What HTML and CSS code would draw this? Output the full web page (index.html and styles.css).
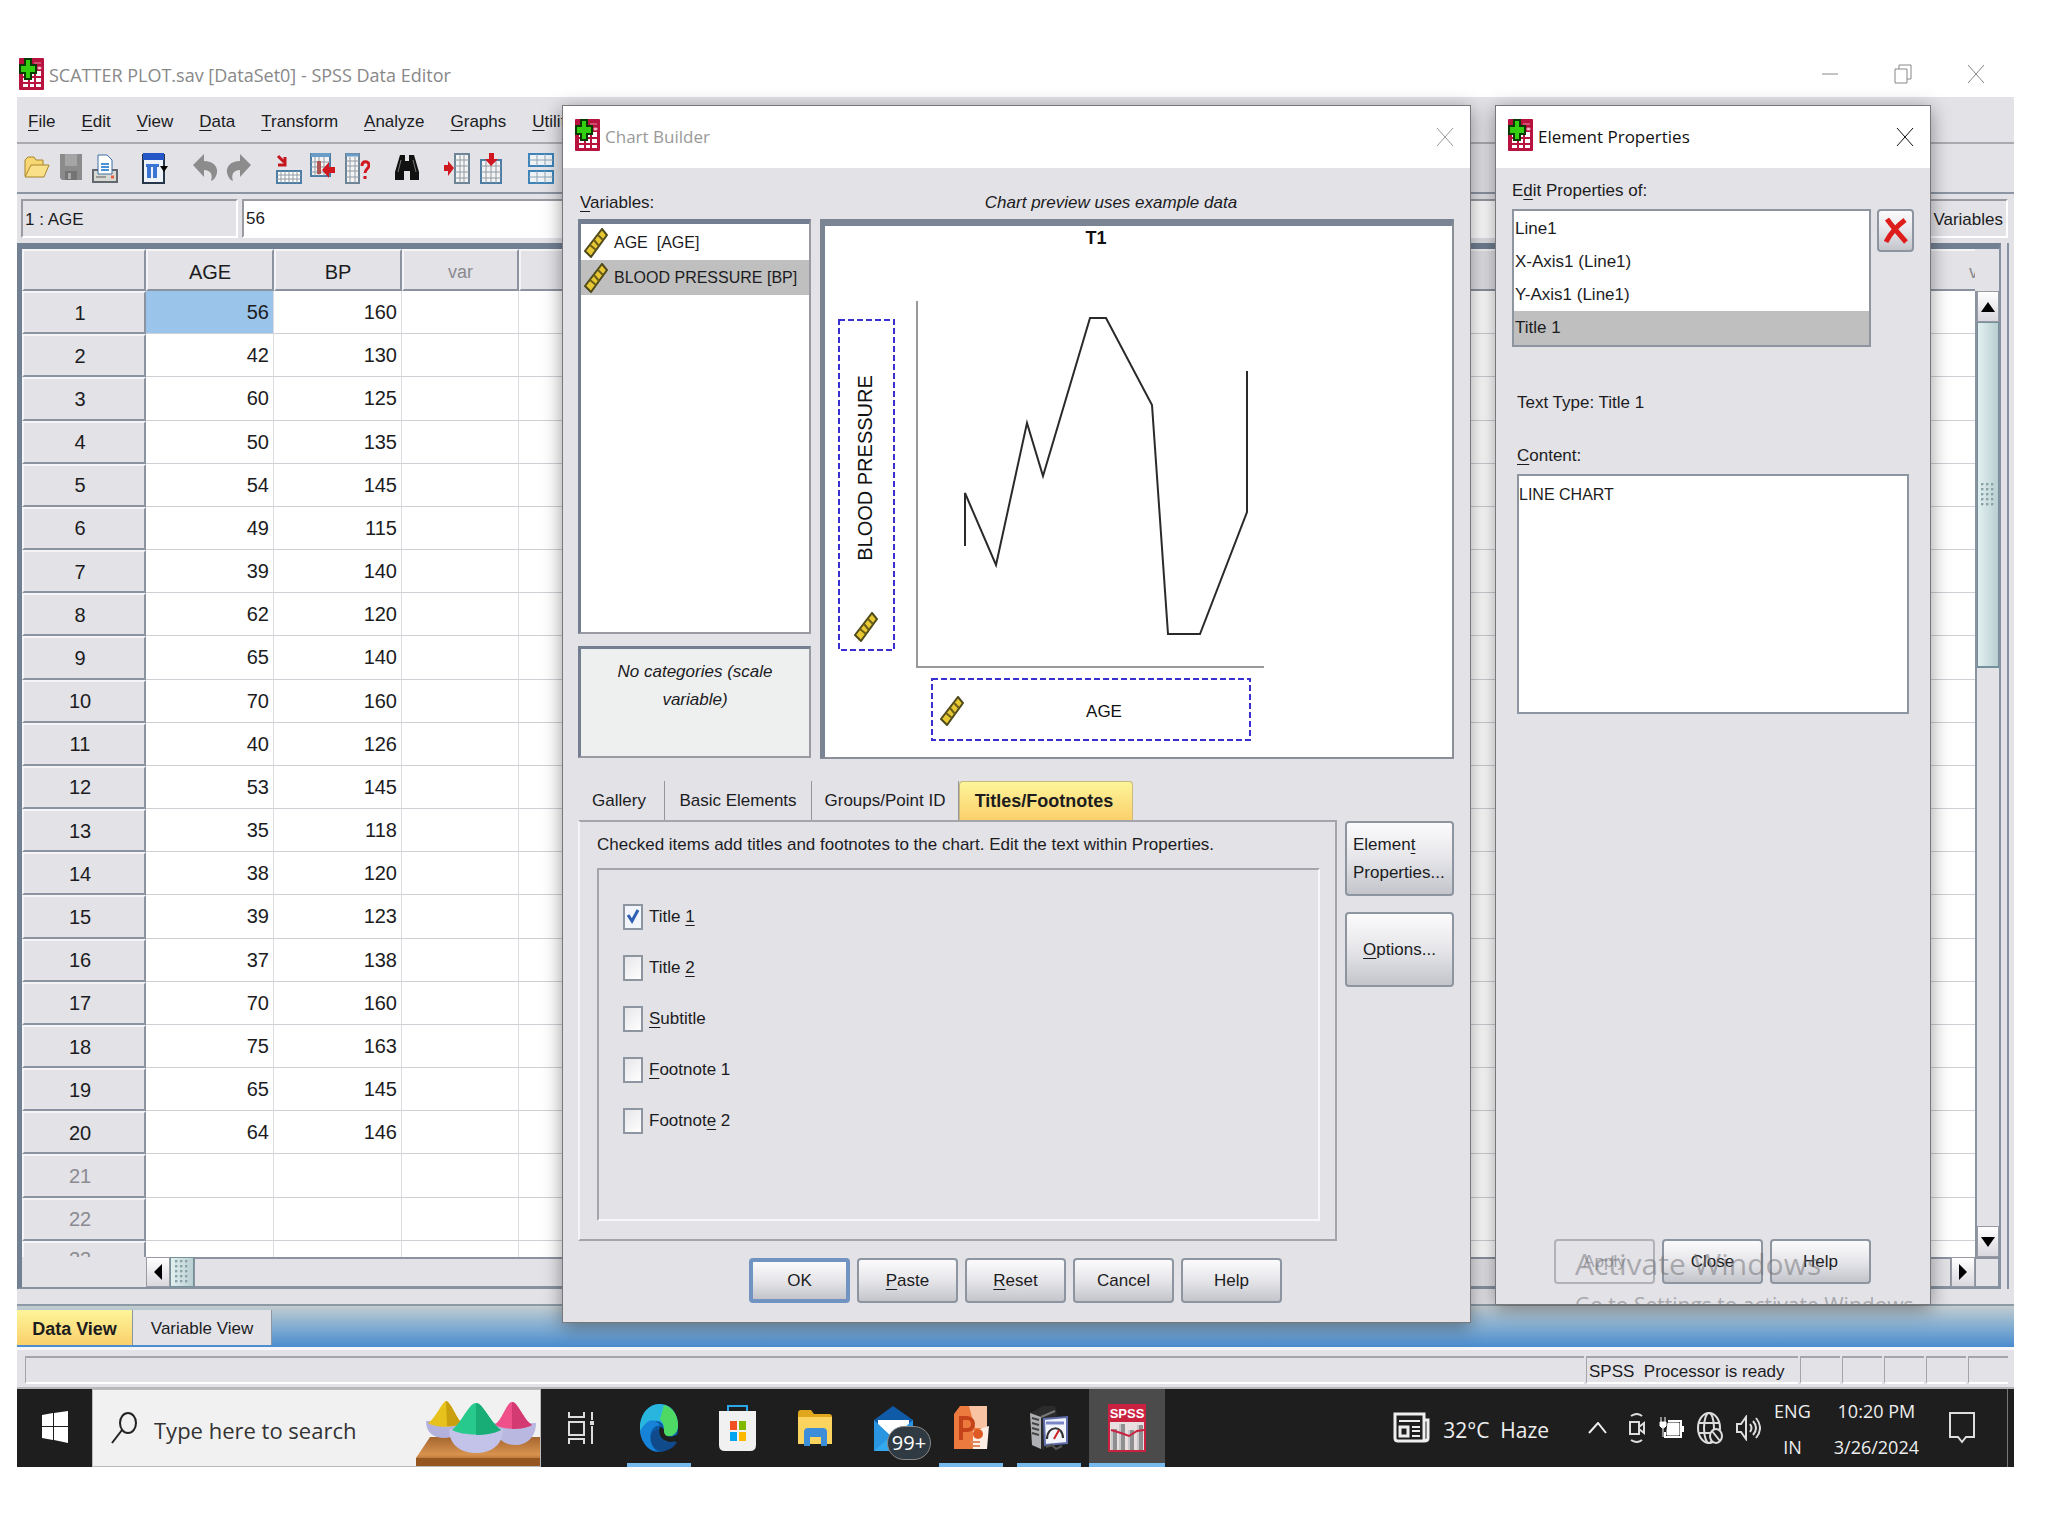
FILE: index.html
```html
<!DOCTYPE html>
<html lang="en">

<head>
    <meta charset="UTF-8">
    <meta name="viewport" content="width=device-width, initial-scale=1.0">
    <title>SCATTER PLOT.sav [DataSet0] - SPSS Data Editor</title>
    <link rel="stylesheet" href="styles.css">
</head>

<body>
    <!-- shared icons -->
    <svg width="0" height="0" class="defs" aria-hidden="true">
        <symbol id="app" viewBox="0 0 25 32">
            <rect width="25" height="32" rx="1" fill="#b8123f"/>
            <path d="M4 13h18v16H4z" fill="#fff"/>
            <path d="M10 12v18M16 10v20M2 19h21M2 25h21" stroke="#b8123f" stroke-width="2"/>
            <path d="M15 5h7M19 9h3v2h-3z" stroke="#e78aa5" fill="#fff"/>
            <path d="M6 1h6v6h5v8h-5v6H6v-6H1V7h5z" fill="#35cf12" stroke="#063a00" stroke-width="2"/>
        </symbol>
        <symbol id="ruler" viewBox="0 0 24 30">
            <path d="M18 1l5 6L7 29l-6-6z" fill="#e8c832" stroke="#4f4a1c" stroke-width="2"/>
            <path d="M14 7l5 5M10 12l5 6M6 17l6 5" stroke="#6b5f1c" stroke-width="2"/>
        </symbol>
        <symbol id="close" viewBox="0 0 18 20">
            <path d="M1 1l16 18M17 1L1 19" stroke="currentColor" fill="none"/>
        </symbol>
    </svg>

    <div class="desktop">
        <main class="editor">
            <header class="titlebar">
                <svg class="app_icon"><use href="#app"/></svg>
                <h1>SCATTER PLOT.sav [DataSet0] - SPSS Data Editor</h1>
                <button aria-label="Minimize"><svg width="18" height="20" viewBox="0 0 18 20"><path d="M1 10h16" stroke="#888"/></svg></button>
                <button aria-label="Restore"><svg width="18" height="20" viewBox="0 0 18 20" fill="none" stroke="#888"><path d="M1 5h12v14H1zM5 5V1h12v14h-4"/></svg></button>
                <button aria-label="Close"><svg width="18" height="20"><use href="#close"/></svg></button>
            </header>

            <nav class="menu">
                <a href="#"><u>F</u>ile</a>
                <a href="#"><u>E</u>dit</a>
                <a href="#"><u>V</u>iew</a>
                <a href="#"><u>D</u>ata</a>
                <a href="#"><u>T</u>ransform</a>
                <a href="#"><u>A</u>nalyze</a>
                <a href="#"><u>G</u>raphs</a>
                <a href="#"><u>U</u>tilities</a>
            </nav>

            <div class="toolbar">
                <button aria-label="Open"><svg viewBox="0 0 26 32"><path d="M1 24V8l3-3h6l2 3h7v5" fill="#f7d774" stroke="#a8862b"/><path d="M1 25l6-12h18l-5 12z" fill="#fbe08a" stroke="#a8862b"/></svg></button>
                <button aria-label="Save"><svg viewBox="0 0 26 32"><path d="M2 2h22v26H4l-2-2z" fill="#8b8b8b"/><path d="M7 2h12v12H7z" fill="#a5a5a5"/><path d="M7 19h12v9H7z" fill="#747474"/><path d="M10 21h3v6h-3z" fill="#aaa"/></svg></button>
                <button aria-label="Print"><svg viewBox="0 0 26 32"><path d="M1 18h24v12H1z" fill="#d9d9d4" stroke="#62686f" stroke-width="2"/><path d="M6 3h9l5 5v14H6z" fill="#fff" stroke="#3b6ea5"/><path d="M9 12h8M9 15h8M9 18h8" stroke="#4b91d8" stroke-width="2"/><path d="M4 25h10" stroke="#999" stroke-width="2"/><path d="M19 25h3" stroke="#e8603c" stroke-width="3"/></svg></button>
                <button aria-label="Dialog recall" class="gap"><svg viewBox="0 0 26 32"><path d="M1 3h21v28H1z" fill="#eef3fa" stroke="#28364a" stroke-width="2"/><path d="M1 1h21v7H1z" fill="#2456c8"/><path d="M4 12h13v3h-2v11h-4V15h-2v11H5V15H4z" fill="#3a74d4"/><path d="M18 14h8l-4 6z" fill="#000"/></svg></button>
                <button aria-label="Undo" class="gap"><svg viewBox="0 0 26 32"><path d="M1 13L12 2v7c9 0 14 5 13 12-1 4-3 7-6 8 2-6 0-11-7-11v7z" fill="#8c8c8c"/></svg></button>
                <button aria-label="Redo"><svg viewBox="0 0 26 32"><path d="M25 13L14 2v7C5 9 0 14 1 21c1 4 3 7 6 8-2-6 0-11 7-11v7z" fill="#8c8c8c"/></svg></button>
                <button aria-label="Go to case" class="gap"><svg viewBox="0 0 26 32"><path d="M2 4l6 6M9 5v8H2" stroke="#c6161d" stroke-width="3" fill="none"/><path d="M1 19h24v12H1z" fill="#fff" stroke="#4c7da5" stroke-width="2"/><path d="M1 23h24M1 27h24M5 19v12M9 19v12M13 19v12M17 19v12M21 19v12" stroke="#909aa4"/></svg></button>
                <button aria-label="Go to variable"><svg viewBox="0 0 26 32"><path d="M1 2h19v22H1z" fill="#f4f4f4" stroke="#4c7da5" stroke-width="2"/><path d="M1 3h19" stroke="#6a9cc8" stroke-width="4"/><path d="M1 10h19M1 15h19M1 20h19M5 5v19M9 5v19M14 5v19" stroke="#909aa4"/><path d="M7 9h4v13H7z" fill="#b0554f"/><path d="M12 18l7-8v5h6v6h-6v5z" fill="#cf1820"/></svg></button>
                <button aria-label="Variables"><svg viewBox="0 0 26 32"><path d="M2 2h13v29H2z" fill="#f4f4f4" stroke="#6d8496" stroke-width="2"/><path d="M2 3h13" stroke="#6a9cc8" stroke-width="3"/><path d="M2 9h13M2 14h13M2 19h13M2 25h13M6 5v26M11 5v26" stroke="#909aa4"/><path d="M18 14c0-6 7-5 7-1 0 4-4 4-4 8M21 24v3" stroke="#cf1820" stroke-width="3" fill="none"/></svg></button>
                <button aria-label="Find" class="gap"><svg viewBox="0 0 26 32"><path d="M6 3h5v6h4V3h5l5 17v8h-9v-9h-6v9H1v-8z" fill="#111"/><path d="M7 8L4 20M19 8l3 12" stroke="#777"/></svg></button>
                <button aria-label="Insert cases" class="gap"><svg viewBox="0 0 26 32"><path d="M11 2h14v29H11z" fill="#f4f4f4" stroke="#6d8496" stroke-width="2"/><path d="M11 8h14M11 14h14M11 20h14M11 26h14M16 2v29M20 2v29" stroke="#909aa4"/><path d="M10 16L4 9v4H0v6h4v5z" fill="#cf1820"/></svg></button>
                <button aria-label="Insert variable"><svg viewBox="0 0 26 32"><path d="M3 8h20v23H3z" fill="#f4f4f4" stroke="#4c7da5" stroke-width="2"/><path d="M3 14h20M3 20h20M3 26h20M8 8v23M13 8v23M18 8v23" stroke="#909aa4"/><path d="M13 14L7 7h4V1h5v6h4z" fill="#cf1820"/></svg></button>
                <button aria-label="Split file" class="gap"><svg viewBox="0 0 26 32"><path d="M1 2h24v12H1zM1 19h24v12H1z" fill="#eef3f7" stroke="#3f84b8" stroke-width="2"/><path d="M1 8h24M9 2v12M17 2v12M1 25h24M9 19v12M17 19v12" stroke="#90a4b4"/></svg></button>
            </div>

            <div class="cellbar">
                <div class="cell_name">1 : AGE</div>
                <input class="cell_value" type="text" value="56" aria-label="Cell value">
                <div class="cell_info">Variables</div>
            </div>

            <div class="sheet">
                <div class="sheet_view">
                    <table>
                        <thead><tr></tr></thead>
                        <tbody></tbody>
                    </table>
                </div>
                <div class="vscroll">
                    <button aria-label="Scroll up"><svg width="14" height="10" viewBox="0 0 14 10"><path d="M0 10L7 0l7 10z"/></svg></button>
                    <div class="vthumb"><i class="grip"></i></div>
                    <div class="vtrack"></div>
                    <button aria-label="Scroll down"><svg width="14" height="10" viewBox="0 0 14 10"><path d="M0 0l7 10 7-10z"/></svg></button>
                </div>
                <div class="hscroll">
                    <span class="stub"></span>
                    <button aria-label="Scroll left"><svg width="8" height="16" viewBox="0 0 8 16"><path d="M8 0L0 8l8 8z"/></svg></button>
                    <div class="hthumb"><i class="grip"></i></div>
                    <div class="htrack"></div>
                    <button aria-label="Scroll right"><svg width="8" height="16" viewBox="0 0 8 16"><path d="M0 0l8 8-8 8z"/></svg></button>
                    <span class="corner"></span>
                </div>
            </div>

            <div class="views">
                <button class="active">Data View</button>
                <button>Variable View</button>
            </div>

            <footer class="status">
                <span class="wide"></span>
                <span class="ready">SPSS&nbsp; Processor is ready</span>
                <span></span><span></span><span></span><span></span><span></span>
            </footer>
        </main>

        <section class="dialog chart_builder">
            <header>
                <svg class="app_icon"><use href="#app"/></svg>
                <h2>Chart Builder</h2>
                <button aria-label="Close"><svg width="18" height="20"><use href="#close"/></svg></button>
            </header>
            <div class="builder_top">
                <div class="var_side">
                    <h3><u>V</u>ariables:</h3>
                    <ul class="var_list">
                        <li><svg><use href="#ruler"/></svg>AGE&nbsp; [AGE]</li>
                        <li class="active"><svg><use href="#ruler"/></svg>BLOOD PRESSURE [BP]</li>
                    </ul>
                    <p class="categories">No categories (scale variable)</p>
                </div>
                <div class="preview_side">
                    <h3>Chart preview uses example data</h3>
                    <div class="preview">
                        <svg width="626" height="530" viewBox="0 0 626 530">
                            <text x="270" y="18" class="t1">T1</text>
                            <path d="M91 75v366h347" class="axis"/>
                            <polyline class="line" points="139,320 139,267 170,339 201,197 217,250 264,92 280,92 326,179 342,408 374,408 421,286 421,145"/>
                            <rect x="13" y="94" width="55" height="330" class="drop"/>
                            <rect x="106" y="453" width="318" height="61" class="drop"/>
                            <text transform="translate(46 242) rotate(-90)" class="ylabel">BLOOD PRESSURE</text>
                            <text x="278" y="491" class="xlabel">AGE</text>
                            <use href="#ruler" x="28" y="386" width="24" height="30"/>
                            <use href="#ruler" x="114" y="470" width="24" height="30"/>
                        </svg>
                    </div>
                </div>
            </div>
            <div class="builder_bottom">
                <div class="tabs">
                    <button>Gallery</button>
                    <button>Basic Elements</button>
                    <button>Groups/Point ID</button>
                    <button class="active">Titles/Footnotes</button>
                </div>
                <div class="panel">
                    <p>Checked items add titles and footnotes to the chart. Edit the text within Properties.</p>
                    <div class="checks">
                        <label><input type="checkbox" checked>Title <u>1</u></label>
                        <label><input type="checkbox">Title <u>2</u></label>
                        <label><input type="checkbox"><u>S</u>ubtitle</label>
                        <label><input type="checkbox"><u>F</u>ootnote 1</label>
                        <label><input type="checkbox">Footnot<u>e</u> 2</label>
                    </div>
                </div>
                <div class="side_buttons">
                    <button class="btn">Elemen<u>t</u><br>Properties...</button>
                    <button class="btn center"><u>O</u>ptions...</button>
                </div>
            </div>
            <div class="buttons">
                <button class="btn default">OK</button>
                <button class="btn"><u>P</u>aste</button>
                <button class="btn"><u>R</u>eset</button>
                <button class="btn">Cancel</button>
                <button class="btn">Help</button>
            </div>
        </section>

        <section class="dialog properties">
            <header>
                <svg class="app_icon"><use href="#app"/></svg>
                <h2>Element Properties</h2>
                <button aria-label="Close"><svg width="18" height="20"><use href="#close"/></svg></button>
            </header>
            <h3>E<u>d</u>it Properties of:</h3>
            <div class="element_row">
                <ul class="elements">
                    <li>Line1</li>
                    <li>X-Axis1 (Line1)</li>
                    <li>Y-Axis1 (Line1)</li>
                    <li class="active">Title 1</li>
                </ul>
                <button class="btn delete" aria-label="Delete"><svg width="24" height="26" viewBox="0 0 24 26"><path d="M3 1c5 7 12 15 19 23M21 2C13 8 6 16 2 24" stroke="#dd1c1c" stroke-width="5" fill="none"/></svg></button>
            </div>
            <p class="text_type">Text Type: Title 1</p>
            <label for="content"><u>C</u>ontent:</label>
            <textarea id="content" autofocus>LINE CHART</textarea>
            <div class="buttons">
                <button class="btn" disabled>Apply</button>
                <button class="btn">Close</button>
                <button class="btn">Help</button>
            </div>
            <div class="watermark">
                <p>Activate Windows</p>
                <p class="small">Go to Settings to activate Windows.</p>
            </div>
        </section>

        <div class="taskbar">
            <button class="start" aria-label="Start"><svg width="26" height="32" viewBox="0 0 26 32" fill="#fff"><path d="M0 4l11-2v13H0zM12 2l14-2v15H12zM0 16h11v13L0 27zM12 16h14v16l-14-3z"/></svg></button>
            <label class="search">
                <svg width="26" height="32" viewBox="0 0 26 32" fill="none" stroke="#222" stroke-width="2"><ellipse cx="17" cy="11" rx="8" ry="10"/><path d="M11 18L1 31"/></svg>
                <input type="text" placeholder="Type here to search" aria-label="Search">
                <svg class="art" width="124" height="66" viewBox="0 0 124 66">
                    <defs>
                        <linearGradient id="wood" x2="0" y2="1"><stop offset="0" stop-color="#a5662f"/><stop offset=".6" stop-color="#d8924e"/><stop offset="1" stop-color="#8a4c1d"/></linearGradient>
                    </defs>
                    <path d="M14 37h110v29H0v-8z" fill="url(#wood)"/>
                    <path d="M0 58h124v8H0z" fill="#96561f"/>
                    <path d="M10 21h36c0 12-8 17-18 17s-18-5-18-17z" fill="#b3b2dc"/>
                    <path d="M12 23C20 18 26 2 30 1c5 1 10 17 16 22-8 5-26 5-34 0z" fill="#e8c21c"/>
                    <path d="M30 1c5 1 10 17 16 22-4 3-10 3-15 3z" fill="#c99f0f"/>
                    <path d="M78 23h42c0 14-9 22-21 22S78 37 78 23z" fill="#b9b8e0"/>
                    <path d="M79 25C87 18 91 2 96 2c6 0 11 17 20 23-9 5-28 5-37 0z" fill="#f0508a"/>
                    <path d="M96 2c6 0 11 17 20 23-6 3-13 4-20 4z" fill="#d43a72"/>
                    <path d="M33 29h54c0 16-12 24-27 24S33 45 33 29z" fill="#c3c2e8"/>
                    <path d="M36 30C46 22 53 3 60 3s14 19 25 27c-11 6-38 6-49 0z" fill="#27c98c"/>
                    <path d="M60 3c7 0 14 19 25 27-8 4-17 5-25 5z" fill="#18ad76"/>
                </svg>
            </label>
            <div class="apps">
                <button aria-label="Task view"><svg width="28" height="32" viewBox="0 0 28 32" fill="none" stroke="#ddd" stroke-width="2"><path d="M2 0v5h15V0M2 10h15v13H2zM2 32v-5h15v5M25 0v8M25 14v18"/><path d="M23 11h4" stroke-width="4"/></svg></button>
                <button class="open" aria-label="Edge"><svg width="38" height="48" viewBox="0 0 38 48">
                    <ellipse cx="19" cy="24" rx="19" ry="24" fill="#0c59a4"/>
                    <path d="M0 20C2 7 10 0 20 0c12 0 18 11 18 21 0 8-5 12-11 11-4-1-3-3-3-7 0-6-5-9-10-8C7 17 3 22 0 28z" fill="#29b6de"/>
                    <path d="M24 1c9 2 14 11 14 20 0 8-5 12-11 11-4-1-3-3-3-7 0-5-2-8-4-10z" fill="#4ed964"/>
                    <path d="M9 17c-6 4-9 10-9 11 2 12 9 19 18 20-7-5-9-13-7-20 2-4 5-7 9-6-2-5-7-7-11-5z" fill="#1683d8"/>
                    <path d="M19 25c-3 8 4 15 15 13 3-1 4 0 1 3-5 6-14 8-20 3-6-6-6-18 4-19z" fill="#114a8b"/>
                    <path d="M20 23c-3 8 2 14 10 15 4 0 7-1 8-4v-4c-3 3-14 5-14-3 0-2-2-4-4-4z" fill="#1e1e1e"/>
                </svg></button>
                <button aria-label="Store"><svg width="37" height="48" viewBox="0 0 37 48"><path d="M9 8V2h19v6" fill="none" stroke="#28a8ea" stroke-width="2"/><path d="M0 7h37v34q0 6-6 6H6q-6 0-6-6z" fill="#f1f1f1"/><path d="M11 17h7v9h-7z" fill="#f25022"/><path d="M20 17h7v9h-7z" fill="#7fba00"/><path d="M11 28h7v9h-7z" fill="#00a4ef"/><path d="M20 28h7v9h-7z" fill="#ffb900"/></svg></button>
                <button aria-label="File Explorer"><svg width="34" height="36" viewBox="0 0 34 36"><path d="M0 3q0-3 3-3h10l3 4h15q3 0 3 3v27H0z" fill="#e0a71c"/><path d="M0 7h34v27H0z" fill="#fbd35f"/><path d="M6 36V22q0-4 4-4h15q4 0 4 4v14h-6v-9H12v9z" fill="#3d8ed8"/></svg></button>
                <button aria-label="Mail"><svg width="39" height="46" viewBox="0 0 39 46"><path d="M0 15L19 1l20 14v8H0z" fill="#0f5ba8"/><path d="M4 15h31v17H4z" fill="#fff"/><path d="M0 15l19 18 20-18v31H0z" fill="#2a95e0"/><path d="M0 46l19-17 20 17z" fill="#35a9ee"/></svg><b class="badge">99+</b></button>
                <button class="open" aria-label="PowerPoint"><svg width="37" height="46" viewBox="0 0 37 46"><path d="M7 1h27v43H1V9z" fill="#ec7a3f"/><path d="M16 1h18v22H22z" fill="#f8c3a2"/><path d="M20 26l16-5-2 23H20z" fill="#fdeee6"/><circle cx="25" cy="29" r="5" fill="#dd5a24"/><path d="M8 35V13h6c8 0 8 12 0 12h-4" fill="none" stroke="#c5431a" stroke-width="4"/><path d="M17 37h10M19 41h8" stroke="#dd8a62" stroke-width="2"/></svg></button>
                <button class="open" aria-label="Performance"><svg width="40" height="46" viewBox="0 0 40 46"><path d="M1 8L14 1h12l2 8-13 36-12-4z" fill="#2b2b2b"/><path d="M1 8l11 4v32L3 40z" fill="#aeb0b3"/><path d="M3 13l7 2M3 18l7 2M3 23l7 2M3 28l7 2" stroke="#444" stroke-width="2"/><path d="M12 12l14-6" stroke="#777" stroke-width="2"/><path d="M15 14l23-2v26l-22 2z" fill="#f2f4fb" stroke="#5f6dab" stroke-width="2"/><path d="M17 18h18" stroke="#7a86c8" stroke-width="3"/><path d="M18 34c0-14 16-14 16-1" fill="none" stroke="#333" stroke-width="2"/><path d="M25 34l5-9" stroke="#c22" stroke-width="2"/><path d="M17 42l6-2 4 4 6-3" stroke="#555" stroke-width="2" fill="none"/></svg></button>
                <button class="open current" aria-label="SPSS"><svg width="38" height="48" viewBox="0 0 38 48"><path d="M0 0h38v48H0z" fill="#cb2140"/><path d="M2 18h34v28H2z" fill="#e9dfe0"/><path d="M3 25h6v21H3zM11 20h6v26h-6zM20 26h6v20h-6zM29 21h6v25h-6z" fill="#8f8f92"/><path d="M4 25v21M12 20v26M21 26v20M30 21v25" stroke="#c9c9cb" stroke-width="2"/><path d="M3 26l10 3 8 3 8-5 7-1" stroke="#cb2140" stroke-width="2" fill="none"/><text x="19" y="14" class="spss_logo">SPSS</text></svg></button>
            </div>
            <div class="tray">
                <svg width="37" height="32" viewBox="0 0 37 32" fill="none" stroke="#eee" stroke-width="3"><path d="M2 2h29v27H5q-3 0-3-3zM31 8h4v18q0 3-4 3"/><path d="M6 9h21M19 15h8M19 19h8M19 24h8" stroke-width="2"/><path d="M7 15h8v9H7z"/></svg>
                <span class="weather">32°C&nbsp; Haze</span>
                <svg width="19" height="12" viewBox="0 0 19 12" fill="none" stroke="#eee" stroke-width="2"><path d="M1 11l9-10 8 10"/></svg>
                <svg class="cam" width="18" height="30" viewBox="0 0 18 30" fill="none" stroke="#ddd" stroke-width="2"><path d="M2 9h9v12H2zM11 14l5-4v10l-5-4M3 3q6-4 11 0M3 27q6 4 11 0"/></svg>
                <svg width="25" height="22" viewBox="0 0 25 22" fill="none" stroke="#fff"><path d="M9 4h13v16H6v-5" stroke-width="2"/><path d="M9 6h11v12H8v-5z" fill="#fff"/><path d="M24 9v6" stroke-width="2"/><path d="M2 0v5M6 0v5M1 5h6v4q-3 4-6 0zM4 11v9" fill="#fff"/></svg>
                <svg width="26" height="32" viewBox="0 0 26 32" fill="none" stroke="#ddd" stroke-width="2"><ellipse cx="12" cy="16" rx="11" ry="15"/><ellipse cx="12" cy="16" rx="5" ry="15"/><path d="M1 11h22M1 21h14"/><ellipse cx="19" cy="24" rx="6" ry="7" fill="#1e1e1e"/><path d="M15 19l8 10"/></svg>
                <svg width="25" height="26" viewBox="0 0 25 26" fill="none" stroke="#ddd" stroke-width="2"><path d="M1 9h4l5-7v22l-5-7H1zM14 9q3 4 0 8M17 6q6 7 0 14M20 3q8 10 0 20"/></svg>
                <span class="two">ENG<br>IN</span>
                <span class="two clock">10:20 PM<br>3/26/2024</span>
                <svg class="notes" width="26" height="32" viewBox="0 0 26 32" fill="none" stroke="#ddd" stroke-width="2"><path d="M1 1h24v24h-8l-4 5-4-5H1z"/></svg>
            </div>
        </div>
    </div>

    <script>
        var cases = [
            [56, 160], [42, 130], [60, 125], [50, 135], [54, 145],
            [49, 115], [39, 140], [62, 120], [65, 140], [70, 160],
            [40, 126], [53, 145], [35, 118], [38, 120], [39, 123],
            [37, 138], [70, 160], [75, 163], [65, 145], [64, 146]
        ];
        var vars = ["AGE", "BP"];
        var columns = 16;
        var rows = 23;

        var head = '<th class="num"></th>';
        for (var c = 0; c < columns; c++) {
            var cls = c < vars.length ? "used" : "empty";
            head += '<th class="' + cls + '">' + (vars[c] || "var") + "</th>";
        }
        document.querySelector(".sheet thead tr").innerHTML = head;

        var html = "";
        for (var r = 0; r < rows; r++) {
            html += '<tr><th class="' + (r < cases.length ? "" : "empty") + '">' + (r + 1) + "</th>";
            for (var c = 0; c < columns; c++) {
                var value = cases[r] && c < vars.length ? cases[r][c] : "";
                html += (r == 0 && c == 0 ? '<td class="active">' : "<td>") + value + "</td>";
            }
            html += "</tr>";
        }
        document.querySelector(".sheet tbody").innerHTML = html;

        var content = document.querySelector("#content");
        content.setSelectionRange(content.value.length, content.value.length);
    </script>
</body>

</html>
```
FILE: styles.css
```css
* {
    margin: 0;
    padding: 0;
    box-sizing: border-box;
}

body {
    height: 100vh;
    padding: 52px 34px 69px 17px;
    background: #fff;
    color: #1c1c1e;
    font-family: "Liberation Sans", Arial, sans-serif;
    font-size: 17px;
    line-height: 28px;
    overflow: hidden;
}

button,
input,
textarea {
    font: inherit;
    color: inherit;
    border: none;
    background: none;
    outline: none;
}

li {
    list-style: none;
}

a {
    color: inherit;
    text-decoration: none;
}

u {
    text-underline-offset: 3px;
}

h1,
h2,
h3 {
    font-size: 17px;
    font-weight: normal;
}

.defs {
    position: absolute;
}

.desktop {
    position: relative;
    display: flex;
    flex-direction: column;
    height: 100%;
}

.app_icon {
    width: 25px;
    height: 32px;
    flex: none;
}

/* data editor */
.editor {
    flex: 1;
    min-height: 0;
    display: flex;
    flex-direction: column;
    background: #e2e2e7;
}

.titlebar {
    display: flex;
    align-items: center;
    height: 45px;
    padding: 0 29px 2px 2px;
    background: #fff;
    color: #888;
}

.titlebar h1,
.dialog h2 {
    flex: 1;
    padding-left: 5px;
    font-family: "Open Sans", "Noto Sans", sans-serif;
}

.titlebar h1 {
    padding-top: 3px;
    font-size: 18px;
}

.titlebar button {
    width: 18px;
    height: 20px;
    margin-left: 55px;
}

.titlebar svg,
.dialog svg,
.toolbar svg {
    display: block;
}

.menu {
    display: flex;
    gap: 26px;
    height: 47px;
    padding: 11px 11px 8px;
    border-bottom: 2px solid #aaaab0;
    overflow: hidden;
}

.toolbar {
    display: flex;
    align-items: center;
    gap: 8px;
    height: 50px;
    padding: 0 7px;
    border-bottom: 2px solid #8c95a3;
}

.toolbar button,
.toolbar svg {
    width: 26px;
    height: 32px;
}

.toolbar .gap {
    margin-left: 16px;
}

.cellbar {
    display: flex;
    gap: 4px;
    height: 49px;
    padding: 5px 6px 5px 4px;
}

.cellbar > * {
    border: 2px solid #fff;
    border-top-color: #9a9aa2;
    border-left-color: #9a9aa2;
    line-height: 38px;
    padding-left: 2px;
}

.cell_name {
    width: 217px;
}

.cell_value {
    flex: 1;
    background: #fff;
}

.cell_info {
    width: 110px;
    text-align: right;
    padding-right: 3px;
}

.sheet {
    flex: 1;
    min-height: 0;
    display: grid;
    grid-template-columns: 1fr 24px;
    grid-template-rows: 1fr 30px;
    margin-right: 13px;
    border-top: 6px solid #718093;
    border-left: 5px solid #718093;
    border-right: 2px solid #8592a2;
    border-bottom: 2px solid #8592a2;
    box-shadow: 6px 0 0 #e2e2e7, 8px 0 0 #8592a2;
}

.sheet_view {
    grid-area: 1 / 1;
    background: #fff;
    overflow: hidden;
}

.sheet table {
    width: 2018px;
    height: 1038px;
    table-layout: fixed;
    border-collapse: separate;
    border-spacing: 0;
    font-size: 20px;
}

.sheet th {
    width: 117px;
    font-weight: normal;
    background: #e2e2e7;
    border: 2px solid #f5f5f8;
    border-right-color: #8b93a0;
    border-bottom-color: #8b93a0;
}

.sheet thead th {
    height: 42px;
    padding-top: 4px;
}

.sheet thead .num {
    width: 124px;
}

.sheet thead .used {
    width: 128px;
}

.sheet .empty {
    color: #8a8a90;
}

.sheet thead .empty {
    font-size: 18px;
}

.sheet tbody th {
    padding-right: 8px;
}

.sheet tbody tr:last-child th {
    padding-top: 2px;
    vertical-align: top;
}

.sheet td {
    padding-right: 4px;
    text-align: right;
    border-right: 1px solid #dcdce2;
    border-bottom: 1px solid #cfcfd6;
}

.sheet td.active {
    background: #9ac4ea;
}

.vscroll {
    grid-area: 1 / 2;
    display: flex;
    flex-direction: column;
    margin-top: 42px;
    background: #e2e2e7;
    border-left: 2px solid #8b93a0;
}

.vscroll button,
.hscroll button {
    display: flex;
    align-items: center;
    justify-content: center;
    border: 1px solid #9a9aa2;
    background: linear-gradient(#fff, #d8d8de);
}

.vscroll button {
    height: 31px;
}

.vthumb,
.hthumb {
    display: flex;
    align-items: center;
    justify-content: center;
    background: linear-gradient(90deg, #e2efef, #b9cfd2);
    border: 1px solid #74909a;
}

.vthumb {
    flex: 345;
}

.vtrack {
    flex: 561;
    border-top: 1px solid #74909a;
}

.grip {
    width: 14px;
    height: 24px;
    background: radial-gradient(circle at 1px 1px, #88a4aa 1px, transparent 2px) 0 0 / 5px 5px;
}

.hscroll {
    grid-area: 2 / 1 / 3 / 3;
    display: flex;
}

.stub {
    width: 124px;
}

.hscroll button,
.hthumb,
.corner {
    width: 24px;
}

.htrack {
    flex: 1;
}

.htrack,
.corner {
    border: 1px solid #8b93a0;
    border-top-width: 2px;
}

.views {
    display: flex;
    height: 43px;
    margin-top: 15px;
    padding: 4px 0 2px;
    border-top: 2px solid #8c9aa6;
    background: linear-gradient(#c3ccd0, #8fb4d2 40%, #4a8ccf);
}

.views button {
    width: 139px;
    padding-top: 2px;
    background: #e2e2e7;
    border-right: 1px solid #8c95a3;
}

.views .active {
    width: 116px;
    font-size: 18px;
    font-weight: bold;
    background: linear-gradient(#fdf59a, #fbd06b);
}

.status {
    display: flex;
    gap: 2px;
    height: 42px;
    padding: 6px 6px 3px 8px;
    border-top: 3px solid #f6f6f8;
    border-bottom: 2px solid #b8b8bc;
}

.status span {
    width: 40px;
    border-top: 2px solid #a4a4aa;
    border-left: 1px solid #a4a4aa;
    border-bottom: 2px solid #fff;
    line-height: 28px;
}

.status .wide {
    flex: 1;
}

.status .ready {
    width: 212px;
    padding-left: 2px;
    white-space: nowrap;
}

/* dialogs */
.dialog {
    position: absolute;
    top: 53px;
    display: flex;
    flex-direction: column;
    background: #e2e2e7;
    border: 1px solid #77777c;
    box-shadow: 0 4px 18px rgba(0, 0, 0, .4);
}

.dialog header {
    display: flex;
    align-items: center;
    height: 62px;
    padding: 0 16px 0 12px;
    background: #fff;
}

.dialog header .app_icon {
    margin-bottom: 4px;
}

.btn {
    border: 2px solid #8d95a1;
    border-radius: 4px;
    background: linear-gradient(#fbfbfc, #e6e6ea 50%, #c3c5cb);
}

.btn:disabled {
    background: none;
    border-color: #b0b2b8;
    color: #a4a4aa;
}

.buttons {
    display: flex;
    gap: 7px;
}

.buttons .btn {
    width: 101px;
    height: 45px;
}

.chart_builder {
    left: 545px;
    width: 909px;
    height: 1218px;
}

.chart_builder header {
    color: #999;
}

.chart_builder h3 {
    height: 51px;
    padding: 21px 2px 0;
}

.builder_top {
    display: flex;
    gap: 9px;
    padding: 0 16px 0 15px;
}

.var_side {
    width: 233px;
}

.var_list {
    height: 415px;
    padding-top: 1px;
    font-size: 16px;
    background: #fff;
    border: 3px solid #737f90;
    border-top-width: 5px;
    border-right: 2px solid #9a9aa2;
    border-bottom: 2px solid #9a9aa2;
}

.var_list li {
    display: flex;
    align-items: center;
    gap: 6px;
    height: 35px;
    padding-left: 3px;
    white-space: nowrap;
}

.var_list svg {
    width: 24px;
    height: 30px;
    flex: none;
}

.var_list .active,
.elements .active {
    background: #bfbfbf;
}

.categories {
    height: 112px;
    margin-top: 12px;
    padding: 9px 30px;
    text-align: center;
    font-style: italic;
    background: #eeefef;
    border: 3px solid #737f90;
    border-right: 2px solid #9a9aa2;
    border-bottom: 2px solid #9a9aa2;
}

.preview_side {
    flex: 1;
}

.preview_side h3 {
    text-align: center;
    font-style: italic;
    padding-right: 54px;
}

.preview {
    height: 540px;
    padding-left: 1px;
    background: #fff;
    border: 5px solid #7b8492;
    border-top-width: 7px;
    border-right: 2px solid #8b8f98;
    border-bottom: 2px solid #8b8f98;
    overflow: hidden;
}

.preview text {
    text-anchor: middle;
    font-family: "Liberation Sans", Arial, sans-serif;
    fill: #111;
}

.preview .t1 {
    font-size: 18px;
    font-weight: bold;
}

.preview .ylabel {
    font-size: 20px;
}

.preview .xlabel {
    font-size: 17px;
}

.axis {
    fill: none;
    stroke: #999;
    stroke-width: 2;
}

.line {
    fill: none;
    stroke: #2a2a2a;
    stroke-width: 2;
}

.drop {
    fill: none;
    stroke: #3a2fd0;
    stroke-width: 2;
    stroke-dasharray: 6 3;
}

.builder_bottom {
    display: grid;
    grid-template-columns: 759px 1fr;
    column-gap: 8px;
    padding: 22px 16px 0 15px;
}

.tabs {
    grid-column: 1 / 3;
    display: flex;
    height: 39px;
}

.tabs button {
    width: 147px;
    border-right: 1px solid #96969c;
}

.tabs button:first-child {
    width: 87px;
    padding-right: 4px;
}

.tabs .active {
    width: 174px;
    padding-right: 4px;
    font-size: 18px;
    font-weight: bold;
    border: 1px solid #c9b97a;
    border-bottom: none;
    border-radius: 4px 4px 0 0;
    background: linear-gradient(#fdf59a, #fbd06b);
}

.panel {
    height: 421px;
    padding: 9px 15px 20px 17px;
    border: 2px solid #a4a4aa;
    border-left-color: #f5f5f8;
}

.panel p {
    height: 37px;
    white-space: nowrap;
}

.checks {
    height: 353px;
    padding: 21px 24px;
    border: 2px solid #f7f7f9;
    border-top-color: #a4a4aa;
    border-left-color: #a4a4aa;
}

.checks label {
    display: flex;
    align-items: center;
    height: 51px;
    white-space: pre;
}

.checks input {
    appearance: none;
    width: 20px;
    height: 26px;
    margin-right: 6px;
    border: 2px solid #8d95a1;
    background: linear-gradient(135deg, #e6e6ea, #fff);
}

.checks input:checked {
    background: #f2f6fc url("data:image/svg+xml,%3Csvg xmlns='http://www.w3.org/2000/svg' viewBox='0 0 16 22'%3E%3Cpath d='M3 9l4 6 6-11' fill='none' stroke='%232f5fb3' stroke-width='3'/%3E%3C/svg%3E") center / 16px 22px;
}

.side_buttons {
    display: flex;
    flex-direction: column;
    gap: 16px;
    padding-top: 1px;
}

.side_buttons .btn {
    height: 75px;
    padding-left: 6px;
    text-align: left;
    white-space: nowrap;
}

.side_buttons .center {
    text-align: center;
    padding: 0;
}

.chart_builder .buttons {
    padding: 17px 0 0 186px;
}

.btn.default {
    border: 4px solid #7193c2;
}

.properties {
    left: 1478px;
    width: 436px;
    height: 1200px;
    padding-bottom: 20px;
}

.properties h3 {
    padding: 9px 16px 4px;
}

.properties header {
    color: #111;
}

.element_row {
    display: flex;
    align-items: flex-start;
    gap: 6px;
    padding: 0 16px;
}

.elements {
    flex: 1;
    height: 138px;
    padding-top: 1px;
    background: #fff;
    border: 2px solid #8d95a1;
}

.elements li {
    height: 33px;
    line-height: 33px;
    padding-left: 1px;
}

.elements .active {
    height: 34px;
}

.delete {
    display: flex;
    align-items: center;
    justify-content: center;
    width: 37px;
    height: 43px;
}

.text_type {
    padding: 42px 21px 25px;
}

.properties label {
    padding: 0 21px 4px;
}

.properties textarea {
    height: 240px;
    margin: 0 21px;
    padding: 5px 0;
    resize: none;
    font-size: 16px;
    background: #fff;
    border: 2px solid #8d95a1;
}

.properties .buttons {
    margin-top: auto;
    padding-left: 58px;
}

.watermark {
    position: absolute;
    left: 79px;
    right: 0;
    bottom: 0;
    height: 62px;
    overflow: hidden;
    pointer-events: none;
    white-space: nowrap;
    color: rgba(110, 110, 115, .5);
    font-family: "Open Sans", "Noto Sans", sans-serif;
    font-size: 30px;
    line-height: 44px;
}

.watermark .small {
    font-size: 21px;
    line-height: 38px;
}

/* taskbar */
.taskbar {
    display: flex;
    align-items: stretch;
    height: 78px;
    background: #1e1e1e;
    color: #eee;
    font-family: "Open Sans", "Noto Sans", sans-serif;
}

.start {
    width: 75px;
    padding-top: 6px;
}

.search {
    display: flex;
    align-items: center;
    width: 449px;
    padding-left: 18px;
    background: #f1f1f1;
    border: 1px solid #bbb;
    color: #333;
}

.search input {
    flex: 1;
    min-width: 0;
    padding: 4px 0 0 17px;
    font-size: 22px;
}

.search input::placeholder {
    color: #333;
}

.art {
    align-self: flex-end;
}

.apps {
    display: flex;
    gap: 2px;
    padding-left: 2px;
}

.apps button {
    position: relative;
    display: flex;
    align-items: center;
    justify-content: center;
    width: 76px;
}

.apps .open::after {
    content: "";
    position: absolute;
    left: 6px;
    right: 6px;
    bottom: 0;
    height: 4px;
    background: #76b9ed;
}

.apps .current {
    background: #4b4b4b;
}

.apps .current::after {
    left: 0;
    right: 0;
}

.badge {
    position: absolute;
    left: 32px;
    top: 37px;
    width: 44px;
    height: 34px;
    border: 1px solid #888;
    border-radius: 17px;
    background: #2f3a42;
    color: #fff;
    font-size: 20px;
    font-weight: normal;
    line-height: 32px;
}

.spss_logo {
    text-anchor: middle;
    font-family: "Liberation Sans", Arial, sans-serif;
    font-size: 13px;
    font-weight: bold;
    fill: #fff;
}

.tray {
    display: flex;
    align-items: center;
    gap: 13px;
    margin-left: auto;
    margin-right: 6px;
    padding-right: 32px;
    border-right: 1px solid #777;
    font-size: 18px;
    white-space: nowrap;
}

.weather {
    padding-top: 3px;
    font-size: 21px;
    margin-right: 26px;
}

.cam {
    margin-left: 8px;
}

.two {
    padding-top: 2px;
    text-align: center;
    line-height: 36px;
}

.clock {
    margin-left: 10px;
}

.notes {
    margin-left: 17px;
}
```
